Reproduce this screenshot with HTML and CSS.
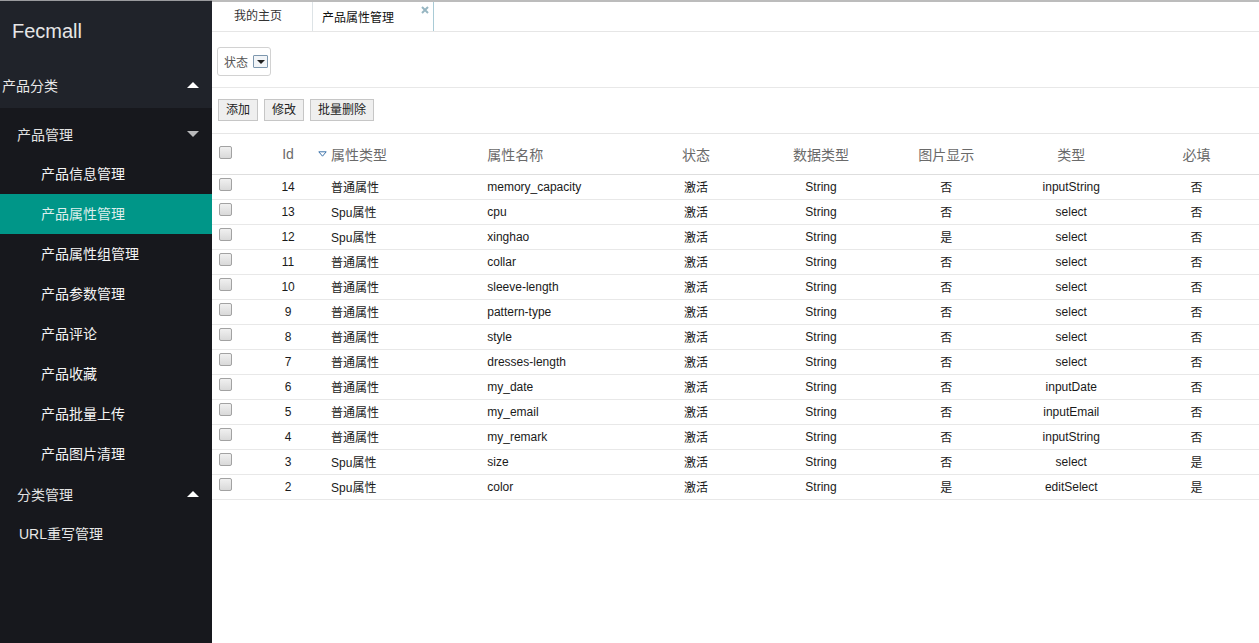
FILE: index.html
```html
<!DOCTYPE html>
<html lang="zh-CN">
<head>
<meta charset="utf-8">
<title>Fecmall</title>
<link rel="stylesheet" href="styles.css">
</head>
<body>
<div class="app">
  <aside class="sidebar">
    <div class="logo">Fecmall</div>
    <div class="nav-cat"><span>产品分类</span><i class="caret up"></i></div>
    <nav class="nav-body">
      <div class="nav-group first"><span>产品管理</span><i class="caret down dim"></i></div>
      <a class="nav-item">产品信息管理</a>
      <a class="nav-item active">产品属性管理</a>
      <a class="nav-item">产品属性组管理</a>
      <a class="nav-item">产品参数管理</a>
      <a class="nav-item">产品评论</a>
      <a class="nav-item">产品收藏</a>
      <a class="nav-item">产品批量上传</a>
      <a class="nav-item">产品图片清理</a>
      <div class="nav-group"><span>分类管理</span><i class="caret up"></i></div>
      <a class="nav-item url">URL重写管理</a>
    </nav>
  </aside>
  <main class="main">
    <div class="tabs">
      <div class="tab">我的主页</div>
      <div class="tab active">产品属性管理
        <svg class="tab-close" width="8" height="8" viewBox="0 0 8 8"><path d="M1 1L7 7M7 1L1 7" stroke="#97b6c2" stroke-width="2"/></svg>
      </div>
    </div>
    <div class="filter">
      <div class="select">
        <span>状态</span>
        <span class="select-arrow"><i></i></span>
      </div>
    </div>
    <div class="actions">
      <button class="btn">添加</button>
      <button class="btn">修改</button>
      <button class="btn">批量删除</button>
    </div>
    <table class="grid">
      <colgroup>
        <col class="c-cb"><col class="c-id"><col class="c-type"><col class="c-name">
        <col class="c-std"><col class="c-std"><col class="c-std"><col class="c-std"><col class="c-std">
      </colgroup>
      <thead>
        <tr>
          <th class="cbcell"><input type="checkbox" class="cb"></th>
          <th class="center">Id</th>
          <th class="left"><svg class="sort" width="9" height="6" viewBox="0 0 9 6"><path d="M0.8 0.8H8.2L4.5 5.2Z" fill="none" stroke="#3d73aa" stroke-width="1"/></svg>属性类型</th>
          <th class="left">属性名称</th>
          <th class="center">状态</th>
          <th class="center">数据类型</th>
          <th class="center">图片显示</th>
          <th class="center">类型</th>
          <th class="center">必填</th>
        </tr>
      </thead>
      <tbody>
        <tr><td class="cbcell"><input type="checkbox" class="cb"></td><td class="center">14</td><td class="left">普通属性</td><td class="left">memory_capacity</td><td class="center">激活</td><td class="center">String</td><td class="center">否</td><td class="center">inputString</td><td class="center">否</td></tr>
        <tr><td class="cbcell"><input type="checkbox" class="cb"></td><td class="center">13</td><td class="left">Spu属性</td><td class="left">cpu</td><td class="center">激活</td><td class="center">String</td><td class="center">否</td><td class="center">select</td><td class="center">否</td></tr>
        <tr><td class="cbcell"><input type="checkbox" class="cb"></td><td class="center">12</td><td class="left">Spu属性</td><td class="left">xinghao</td><td class="center">激活</td><td class="center">String</td><td class="center">是</td><td class="center">select</td><td class="center">否</td></tr>
        <tr><td class="cbcell"><input type="checkbox" class="cb"></td><td class="center">11</td><td class="left">普通属性</td><td class="left">collar</td><td class="center">激活</td><td class="center">String</td><td class="center">否</td><td class="center">select</td><td class="center">否</td></tr>
        <tr><td class="cbcell"><input type="checkbox" class="cb"></td><td class="center">10</td><td class="left">普通属性</td><td class="left">sleeve-length</td><td class="center">激活</td><td class="center">String</td><td class="center">否</td><td class="center">select</td><td class="center">否</td></tr>
        <tr><td class="cbcell"><input type="checkbox" class="cb"></td><td class="center">9</td><td class="left">普通属性</td><td class="left">pattern-type</td><td class="center">激活</td><td class="center">String</td><td class="center">否</td><td class="center">select</td><td class="center">否</td></tr>
        <tr><td class="cbcell"><input type="checkbox" class="cb"></td><td class="center">8</td><td class="left">普通属性</td><td class="left">style</td><td class="center">激活</td><td class="center">String</td><td class="center">否</td><td class="center">select</td><td class="center">否</td></tr>
        <tr><td class="cbcell"><input type="checkbox" class="cb"></td><td class="center">7</td><td class="left">普通属性</td><td class="left">dresses-length</td><td class="center">激活</td><td class="center">String</td><td class="center">否</td><td class="center">select</td><td class="center">否</td></tr>
        <tr><td class="cbcell"><input type="checkbox" class="cb"></td><td class="center">6</td><td class="left">普通属性</td><td class="left">my_date</td><td class="center">激活</td><td class="center">String</td><td class="center">否</td><td class="center">inputDate</td><td class="center">否</td></tr>
        <tr><td class="cbcell"><input type="checkbox" class="cb"></td><td class="center">5</td><td class="left">普通属性</td><td class="left">my_email</td><td class="center">激活</td><td class="center">String</td><td class="center">否</td><td class="center">inputEmail</td><td class="center">否</td></tr>
        <tr><td class="cbcell"><input type="checkbox" class="cb"></td><td class="center">4</td><td class="left">普通属性</td><td class="left">my_remark</td><td class="center">激活</td><td class="center">String</td><td class="center">否</td><td class="center">inputString</td><td class="center">否</td></tr>
        <tr><td class="cbcell"><input type="checkbox" class="cb"></td><td class="center">3</td><td class="left">Spu属性</td><td class="left">size</td><td class="center">激活</td><td class="center">String</td><td class="center">否</td><td class="center">select</td><td class="center">是</td></tr>
        <tr><td class="cbcell"><input type="checkbox" class="cb"></td><td class="center">2</td><td class="left">Spu属性</td><td class="left">color</td><td class="center">激活</td><td class="center">String</td><td class="center">是</td><td class="center">editSelect</td><td class="center">是</td></tr>
      </tbody>
    </table>
  </main>
</div>
</body>
</html>
```

FILE: styles.css
```css
* { box-sizing: border-box; }
html, body { margin: 0; padding: 0; }
body {
  font-family: "Liberation Sans", Arial, "Noto Sans CJK SC", sans-serif;
  background: #fff;
  color: #222;
}
.app {
  display: flex;
  height: 643px;
  overflow: hidden;
}

/* Sidebar */
.sidebar {
  width: 212px;
  flex: 0 0 212px;
  background: #17181d;
  border-top: 1px solid #9a9b9e;
  display: flex;
  flex-direction: column;
}
.logo {
  height: 61px;
  background: #20232a;
  color: #e6e6e6;
  font-size: 20px;
  line-height: 60px;
  padding-left: 12px;
}
.nav-cat {
  height: 46px;
  background: #20232a;
  color: #e8e8e8;
  font-size: 14px;
  padding: 0 13px 0 2px;
  display: flex;
  align-items: center;
  justify-content: space-between;
}
.nav-body {
  display: flex;
  flex-direction: column;
}
.nav-group {
  height: 40px;
  font-size: 14px;
  color: #e2e2e2;
  padding: 0 13px 0 17px;
  display: flex;
  align-items: center;
  justify-content: space-between;
}
.nav-group.first {
  margin-top: 5px;
  height: 41px;
}
.nav-item {
  display: block;
  height: 40px;
  line-height: 40px;
  font-size: 14px;
  color: #f4f4f4;
  padding-left: 41px;
}
.nav-item.active {
  background: #009688;
  color: #dcefec;
}
.nav-item.url {
  padding-left: 19px;
  color: #e8e8e8;
}
.caret {
  display: block;
  width: 0;
  height: 0;
  border-left: 6px solid transparent;
  border-right: 6px solid transparent;
}
.caret.up { border-bottom: 6px solid #fff; }
.caret.down { border-top: 6px solid #fff; }
.caret.dim { border-top-color: #b9b9bb; }

/* Main */
.main {
  flex: 1;
  display: flex;
  flex-direction: column;
  border-top: 2px solid #bcbcbc;
  min-width: 0;
}
.tabs {
  display: flex;
  height: 30px;
  border-bottom: 1px solid #e6e6e6;
}
.tab {
  width: 101px;
  border-right: 1px solid #dde3e6;
  font-size: 12px;
  color: #333;
  text-align: left;
  padding-left: 22px;
  line-height: 28px;
}
.tab.active {
  position: relative;
  width: 121px;
  text-align: left;
  padding-left: 9px;
  line-height: 33px;
  color: #111;
  border-right-color: #a9cbd6;
}
.tab-close {
  position: absolute;
  top: 4px;
  right: 4px;
}

.filter {
  height: 56px;
  border-bottom: 1px solid #e8e8e8;
  padding: 15px 0 0 5px;
}
.select {
  width: 54px;
  height: 29px;
  border: 1px solid #d2d2d2;
  border-radius: 3px;
  display: flex;
  align-items: center;
  padding-left: 6px;
  font-size: 12px;
  color: #555;
}
.select-arrow {
  width: 15px;
  height: 13px;
  margin-left: 5px;
  border: 1px solid #7d97ae;
  border-radius: 1px;
  background: #f2f5f8;
  display: flex;
  align-items: center;
  justify-content: center;
}
.select-arrow i {
  width: 0;
  height: 0;
  border-left: 4px solid transparent;
  border-right: 4px solid transparent;
  border-top: 4px solid #222;
}

.actions {
  height: 46px;
  border-bottom: 1px solid #e6e6e6;
  padding: 11px 0 0 6px;
  display: flex;
  align-items: flex-start;
  gap: 6px;
}
.btn {
  height: 22px;
  padding: 0 7px;
  border: 1px solid #c6c6c6;
  background: #efefef;
  font-family: inherit;
  font-size: 12px;
  color: #222;
  border-radius: 0;
  line-height: 20px;
}

/* Grid */
.grid {
  width: 100%;
  border-collapse: collapse;
  table-layout: fixed;
}
.c-cb { width: 38px; }
.c-id { width: 76px; }
.c-type { width: 156px; }
.c-name { width: 151px; }
.c-std { width: 125px; }
.grid th {
  height: 40px;
  font-size: 14px;
  font-weight: normal;
  color: #6a6a6a;
  border-bottom: 1px solid #dedede;
  padding: 0;
  white-space: nowrap;
}
.grid td {
  height: 25px;
  font-size: 12px;
  color: #1a1a1a;
  border-bottom: 1px solid #e8e8e8;
  padding: 0;
  white-space: nowrap;
}
.grid .center { text-align: center; }
.grid .left { text-align: left; padding-left: 5px; }
.grid .cbcell { text-align: left; padding-left: 7px; vertical-align: top; }
.grid th.cbcell { padding-top: 12px; }
.grid td.cbcell { padding-top: 3px; }
.sort {
  margin-left: -13px;
  margin-right: 4px;
  vertical-align: 3px;
}
.cb {
  appearance: none;
  -webkit-appearance: none;
  display: block;
  margin: 0;
  width: 13px;
  height: 13px;
  border: 1px solid #a2a2a2;
  border-radius: 2px;
  background: linear-gradient(#f0f0f0, #d9d9d9);
}
```
